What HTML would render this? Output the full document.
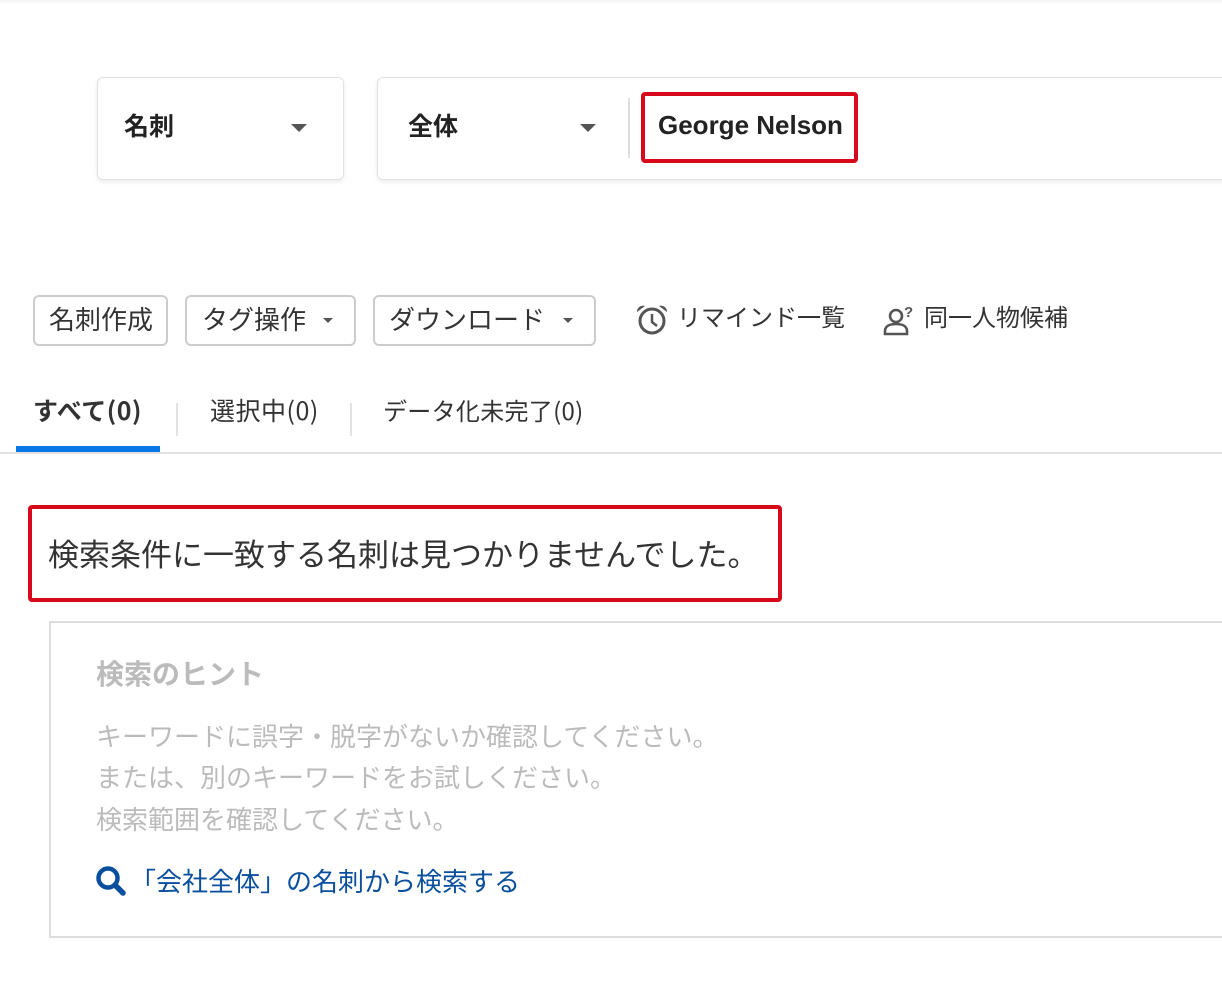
<!DOCTYPE html>
<html><head><meta charset="utf-8"><style>
*{margin:0;padding:0;box-sizing:border-box}
body{width:1222px;height:994px;overflow:hidden;background:#fff;position:relative;font-family:"Noto Sans CJK JP","Liberation Sans",sans-serif;color:#333}
.a{position:absolute;white-space:nowrap}
.box{position:absolute;border:1px solid #e2e2e2;border-radius:6px;background:#fff;box-shadow:0 2px 4px rgba(0,0,0,.08)}
.tri{position:absolute;width:0;height:0;border-left:8px solid transparent;border-right:8px solid transparent;border-top:8px solid #555}
.btn{position:absolute;border:2px solid #ccc;border-radius:6px;height:51px;top:295px;font-size:26px;line-height:44px;color:#333}
.st{position:absolute;width:0;height:0;border-left:5px solid transparent;border-right:5px solid transparent;border-top:5px solid #555;top:21px}
.tab{font-size:25px;line-height:32px;letter-spacing:0.5px}
</style></head><body>
<div class="a" style="left:0;top:0;width:1222px;height:4px;background:linear-gradient(#f2f2f2,#fff)"></div>
<div class="box" style="left:97px;top:77px;width:247px;height:103px"></div>
<div class="a" style="left:124px;top:107px;font-size:25px;font-weight:bold;line-height:36px;color:#222">名刺</div>
<div class="tri" style="left:291px;top:124px"></div>
<div class="box" style="left:377px;top:77px;width:860px;height:103px"></div>
<div class="a" style="left:408px;top:107px;font-size:25px;font-weight:bold;line-height:36px;color:#222">全体</div>
<div class="tri" style="left:580px;top:124px"></div>
<div class="a" style="left:628px;top:98px;width:2px;height:60px;background:#ddd"></div>
<div class="a" style="left:641px;top:92px;width:217px;height:71px;border:4px solid #d60a1a;border-radius:4px"></div>
<div class="a" style="left:658px;top:108px;font-family:'Liberation Sans',sans-serif;font-size:26px;font-weight:bold;line-height:34px;color:#222">George Nelson</div>

<div class="btn" style="left:33px;width:135px;padding-left:14px">名刺作成</div>
<div class="btn" style="left:185px;width:171px;padding-left:15px">タグ操作<div class="st" style="left:136px"></div></div>
<div class="btn" style="left:373px;width:223px;padding-left:14px">ダウンロード<div class="st" style="left:188px"></div></div>

<svg class="a" style="left:635px;top:304px" width="34" height="32" viewBox="0 0 34 32"><circle cx="17" cy="17" r="12" fill="none" stroke="#555" stroke-width="3"/><path d="M17 10v8l5 4" fill="none" stroke="#555" stroke-width="2.5"/><path d="M2 8a6 6 0 0 1 8-6z M32 8a6 6 0 0 0-8-6z" fill="#555"/></svg>
<div class="a" style="left:677px;top:300px;font-size:24px;line-height:32px">リマインド一覧</div>
<svg class="a" style="left:883px;top:304px" width="36" height="32" viewBox="0 0 36 32"><circle cx="13" cy="12" r="6" fill="none" stroke="#555" stroke-width="2.6"/><path d="M2 30v-3c0-5 5-7 11-7s11 2 11 7v3z" fill="none" stroke="#555" stroke-width="2.6"/><text x="21" y="13" font-size="15" font-weight="bold" fill="#555" font-family="Liberation Sans">?</text></svg>
<div class="a" style="left:924px;top:300px;font-size:24px;line-height:32px">同一人物候補</div>

<div class="a tab" style="left:33px;top:394px;font-weight:bold;color:#333">すべて(0)</div>
<div class="a" style="left:176px;top:403px;width:2px;height:33px;background:#e2e2e2"></div>
<div class="a tab" style="left:210px;top:394px">選択中(0)</div>
<div class="a" style="left:350px;top:403px;width:2px;height:33px;background:#e2e2e2"></div>
<div class="a" style="left:383px;top:394px;font-size:24px;line-height:32px;letter-spacing:0.3px">データ化未完了(0)</div>
<div class="a" style="left:0;top:452px;width:1222px;height:2px;background:#e2e2e2"></div>
<div class="a" style="left:16px;top:446px;width:144px;height:6px;background:#0a78e6"></div>

<div class="a" style="left:28px;top:505px;width:754px;height:97px;border:4px solid #d60a1a;border-radius:4px"></div>
<div class="a" style="left:48px;top:533px;font-size:31px;line-height:40px;color:#333">検索条件に一致する名刺は見つかりませんでした。</div>

<div class="a" style="left:49px;top:621px;width:1190px;height:317px;border:2px solid #ddd"></div>
<div class="a" style="left:96px;top:655px;font-size:28px;font-weight:bold;line-height:36px;color:#bbb">検索のヒント</div>
<div class="a" style="left:96px;top:719px;font-size:26px;line-height:34px;color:#bbb">キーワードに誤字・脱字がないか確認してください。</div>
<div class="a" style="left:96px;top:760px;font-size:26px;line-height:34px;color:#bbb">または、別のキーワードをお試しください。</div>
<div class="a" style="left:96px;top:802px;font-size:26px;line-height:34px;color:#bbb">検索範囲を確認してください。</div>
<svg class="a" style="left:95px;top:865px" width="34" height="32" viewBox="0 0 34 32"><circle cx="13" cy="13" r="9.5" fill="none" stroke="#0a4f9e" stroke-width="4.5"/><path d="M20 20l8 8" stroke="#0a4f9e" stroke-width="5.5" stroke-linecap="round"/></svg>
<div class="a" style="left:130px;top:864px;font-size:26px;line-height:34px;color:#0a4f9e">「会社全体」の名刺から検索する</div>
</body></html>
